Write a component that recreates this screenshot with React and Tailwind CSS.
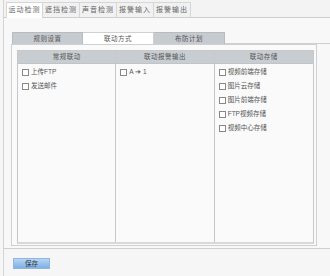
import React from 'react';

const topTabs = ['运动检测', '遮挡检测', '声音检测', '报警输入', '报警输出'];
const subTabs = ['规则设置', '联动方式', '布防计划'];

function Check({ label }) {
    return (
        <div className="flex items-center h-[14px] gap-[2px]">
            <span className="w-[7px] h-[7px] border border-[#888] bg-white shrink-0" />
            <span>{label}</span>
        </div>
    );
}

export default function App() {
    return (
        <div
            className="w-[330px] h-[276px] bg-[#f6f6f6] text-[#555] overflow-hidden"
            style={{ fontFamily: '"Liberation Sans", "Noto Sans CJK SC", sans-serif' }}
        >
            <div className="ml-[3px] h-full border-l border-[#d4d4d4] flex flex-col">
                {/* top tabs */}
                <div className="h-[18px] flex items-end pl-[2px] border-b border-[#cfcfcf] bg-[#f3f3f3] shrink-0">
                    {topTabs.map((t, i) => (
                        <div
                            key={t}
                            className={`flex items-center justify-center border-r border-t border-[#d6d6d6] text-[7px] tracking-[1px] text-[#666] ${i === 0 ? 'w-[37px] border-l bg-white -mb-px h-[16px]' : 'w-[37px] h-[15px] bg-[#f1f1f1]'}`}
                        >
                            {t}
                        </div>
                    ))}
                </div>

                {/* content */}
                <div className="h-[231px] bg-[#f8f8f8] border-b border-[#cfcfcf] pt-[13px] shrink-0">
                    <div className="flex pl-[8px] h-[13px] items-end">
                        {subTabs.map((t, i) => (
                            <div
                                key={t}
                                className={`h-[12px] w-[71px] flex items-center justify-center text-[6.5px] tracking-[0.5px] border-t border-r border-[#b8bcc0] ${i === 0 ? 'border-l' : ''} ${i === 1 ? 'bg-white border-[#d0d0d0]' : 'bg-[#c6cbd0]'}`}
                            >
                                {t}
                            </div>
                        ))}
                        <div className="flex-1 border-b border-[#cfcfcf]" />
                    </div>
                    <div className="ml-[7px] w-[306px] h-[202px] border border-[#d0d0d0] bg-[#fafafa] pt-[5px] pl-[5px] pr-[3px]">
                        <div className="grid grid-cols-3 w-[297px] h-[194px] border border-[#c8c8c8] border-b-2 border-b-[#d8d8d8] text-[6.5px]">
                            {['常规联动', '联动报警输出', '联动存储'].map((h, i) => (
                                <div key={h} className={`flex flex-col ${i < 2 ? 'border-r border-[#c8c8c8]' : ''}`}>
                                    <div className="h-[13px] bg-[#c8cdd2] flex items-center justify-center border-b border-[#bfc4c8] tracking-[0.5px]">{h}</div>
                                    <div className="pl-[4px] pt-[1px] flex flex-col">
                                        {i === 0 && (
                                            <>
                                                <Check label="上传FTP" />
                                                <Check label="发送邮件" />
                                            </>
                                        )}
                                        {i === 1 && <Check label="A ➔ 1" />}
                                        {i === 2 && (
                                            <>
                                                <Check label="视频前端存储" />
                                                <Check label="图片云存储" />
                                                <Check label="图片前端存储" />
                                                <Check label="FTP视频存储" />
                                                <Check label="视频中心存储" />
                                            </>
                                        )}
                                    </div>
                                </div>
                            ))}
                        </div>
                    </div>
                </div>

                {/* save */}
                <div className="pl-[9px] pt-[9px]">
                    <button className="w-[37px] h-[11px] bg-gradient-to-b from-[#b5d5f5] to-[#7fb0e3] border border-[#8fb6de] text-[6.5px] text-[#333] flex items-center justify-center">
                        保存
                    </button>
                </div>
            </div>
        </div>
    );
}
